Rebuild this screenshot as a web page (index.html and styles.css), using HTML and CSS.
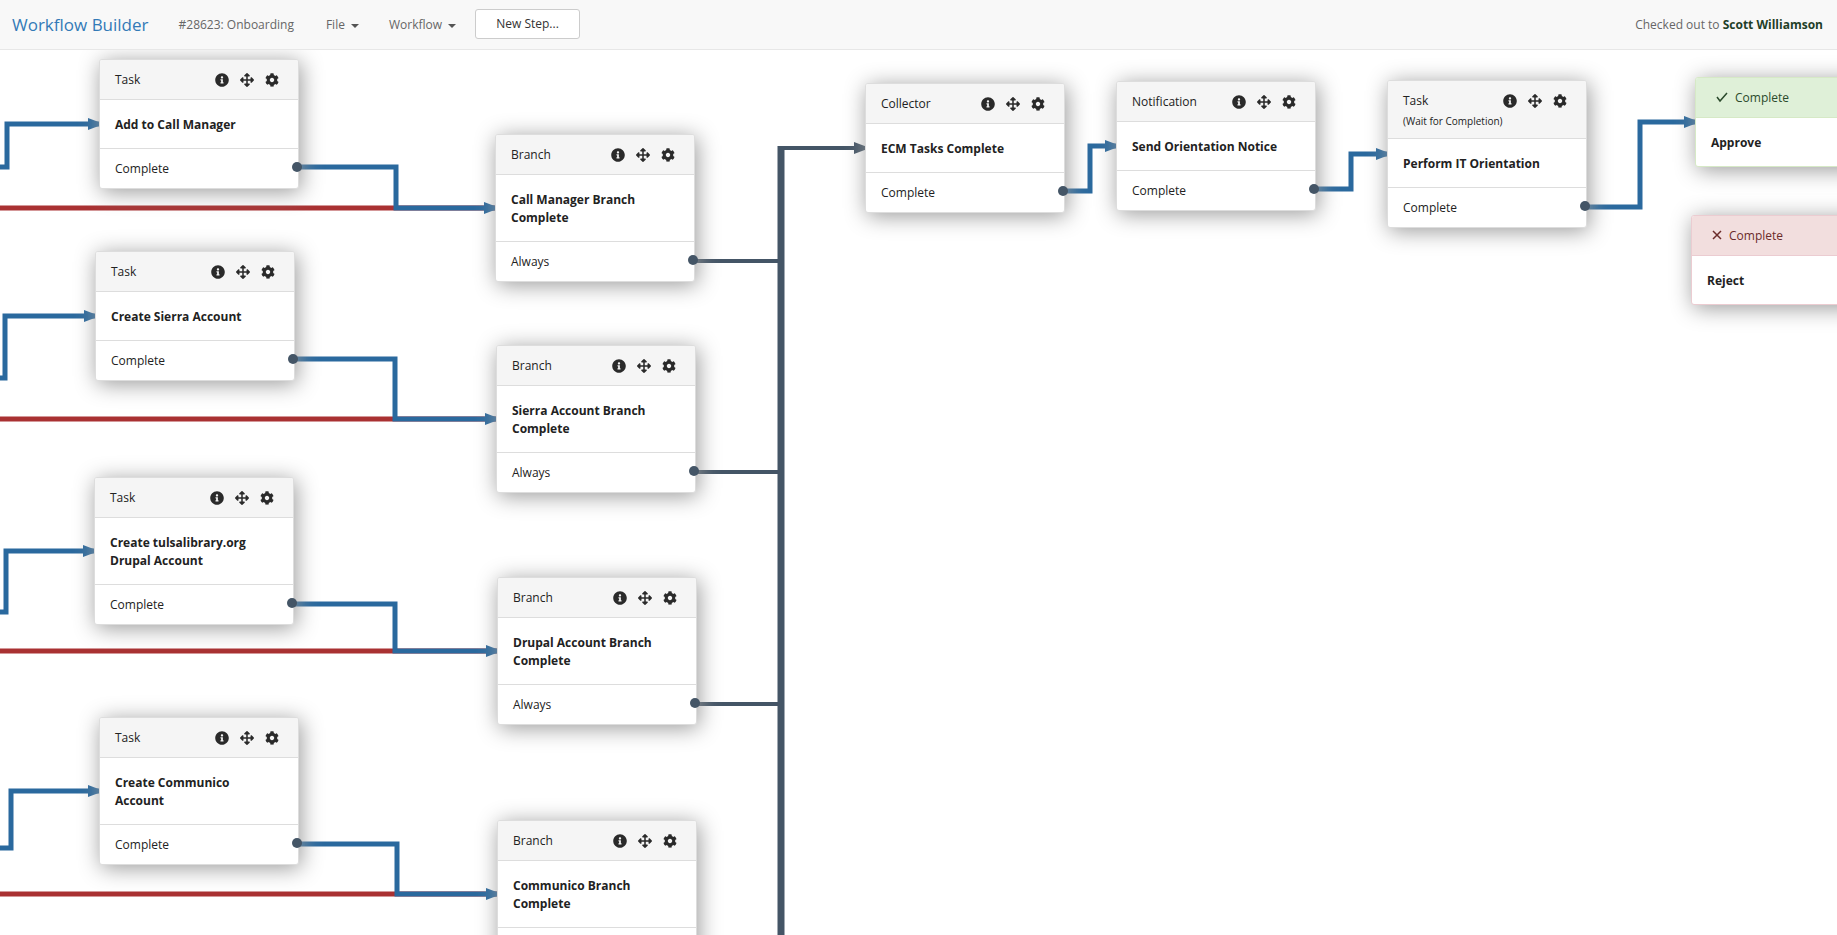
FILE: index.html
```html
<!DOCTYPE html>
<html lang="en">
<head>
<meta charset="utf-8">
<title>Workflow Builder</title>
<link rel="stylesheet" href="styles.css">
</head>
<body>
<svg class="sprite" aria-hidden="true">
  <symbol id="i-info" viewBox="0 0 512 512"><path d="M256 8C119.043 8 8 119.083 8 256c0 136.997 111.043 248 248 248s248-111.003 248-248C504 119.083 392.957 8 256 8zm0 110c23.196 0 42 18.804 42 42s-18.804 42-42 42-42-18.804-42-42 18.804-42 42-42zm56 254c0 6.627-5.373 12-12 12h-88c-6.627 0-12-5.373-12-12v-24c0-6.627 5.373-12 12-12h12v-64h-12c-6.627 0-12-5.373-12-12v-24c0-6.627 5.373-12 12-12h64c6.627 0 12 5.373 12 12v100h12c6.627 0 12 5.373 12 12v24z"/></symbol>
  <symbol id="i-move" viewBox="0 0 512 512"><path d="M352.201 425.775l-79.196 79.196c-9.373 9.373-24.568 9.373-33.941 0l-79.196-79.196c-15.119-15.119-4.411-40.971 16.971-40.97h51.162L228 284H127.196v51.162c0 21.382-25.851 32.09-40.971 16.971L7.029 272.937c-9.373-9.373-9.373-24.569 0-33.941L86.225 159.8c15.119-15.119 40.971-4.411 40.971 16.971V228H228V127.196h-51.23c-21.382 0-32.09-25.851-16.971-40.971l79.196-79.196c9.373-9.373 24.568-9.373 33.941 0l79.196 79.196c15.119 15.119 4.411 40.971-16.971 40.971h-51.162V228h100.804v-51.162c0-21.382 25.851-32.09 40.97-16.971l79.196 79.196c9.373 9.373 9.373 24.569 0 33.941L425.773 352.2c-15.119 15.119-40.971 4.411-40.97-16.971V284H284v100.804h51.23c21.382 0 32.09 25.851 16.971 40.971z"/></symbol>
  <symbol id="i-gear" viewBox="0 0 512 512"><path d="M487.4 315.7l-42.6-24.6c4.3-23.2 4.3-47 0-70.2l42.6-24.6c4.9-2.8 7.1-8.6 5.5-14-11.1-35.6-30-67.8-54.7-94.6-3.8-4.1-10-5.1-14.8-2.3L380.8 110c-17.9-15.4-38.5-27.3-60.8-35.1V25.8c0-5.6-3.9-10.5-9.4-11.7-36.7-8.2-74.3-7.8-109.2 0-5.5 1.2-9.4 6.1-9.4 11.7V75c-22.2 7.9-42.8 19.8-60.8 35.1L88.7 85.5c-4.9-2.8-11-1.9-14.8 2.3-24.7 26.7-43.6 58.9-54.7 94.6-1.7 5.4.6 11.2 5.5 14L67.3 221c-4.3 23.2-4.3 47 0 70.2l-42.6 24.6c-4.9 2.8-7.1 8.6-5.5 14 11.1 35.6 30 67.8 54.7 94.6 3.8 4.1 10 5.1 14.8 2.3l42.6-24.6c17.9 15.4 38.5 27.3 60.8 35.1v49.2c0 5.6 3.9 10.5 9.4 11.7 36.7 8.2 74.3 7.8 109.2 0 5.5-1.2 9.4-6.1 9.4-11.7v-49.2c22.2-7.9 42.8-19.8 60.8-35.1l42.6 24.6c4.9 2.8 11 1.9 14.8-2.3 24.7-26.7 43.6-58.9 54.7-94.6 1.5-5.5-.7-11.3-5.6-14.1zM256 336c-44.1 0-80-35.9-80-80s35.9-80 80-80 80 35.9 80 80-35.9 80-80 80z"/></symbol>
  <symbol id="i-arrow" viewBox="0 0 16 12"><path d="M0 0L16 6L0 12Z"/></symbol>
</svg>

<header class="navbar">
  <a class="brand" href="#">Workflow Builder</a>
  <span class="nav-text">#28623: Onboarding</span>
  <button class="menu" type="button">File<span class="caret"></span></button>
  <button class="menu" type="button">Workflow<span class="caret"></span></button>
  <button class="new-step" type="button">New Step...</button>
  <p class="checkout">Checked out to <strong>Scott Williamson</strong></p>
</header>

<main class="canvas">
  <svg class="links" aria-hidden="true">
    <g class="red">
      <path d="M0 158H495"/><path d="M0 369H496"/><path d="M0 601H497"/><path d="M0 844H497"/>
    </g>
    <g class="blue">
      <path d="M0 117H7V74H99"/>
      <path d="M0 328H5V266H95"/>
      <path d="M0 562H6V501H94"/>
      <path d="M0 798H11V741H99"/>
      <path d="M297 117H396V158H495"/>
      <path d="M293 309H395V369H496"/>
      <path d="M292 554H395V601H497"/>
      <path d="M297 794H397V844H497"/>
      <path d="M1063 141H1090V96H1116"/>
      <path d="M1314 139H1351V104H1387"/>
      <path d="M1585 157H1640V72H1695"/>
    </g>
    <g class="slate">
      <path d="M693 211H780"/><path d="M694 422H780"/><path d="M695 654H780"/>
      <path d="M778 98H865"/>
      <path class="trunk" d="M781 96V1400"/>
    </g>
    <g class="heads">
      <use href="#i-arrow" x="88" y="68" width="16" height="12"/>
      <use href="#i-arrow" x="84" y="260" width="16" height="12"/>
      <use href="#i-arrow" x="83" y="495" width="16" height="12"/>
      <use href="#i-arrow" x="88" y="735" width="16" height="12"/>
      <use href="#i-arrow" x="484" y="152" width="16" height="12"/>
      <use href="#i-arrow" x="485" y="363" width="16" height="12"/>
      <use href="#i-arrow" x="486" y="595" width="16" height="12"/>
      <use href="#i-arrow" x="486" y="838" width="16" height="12"/>
      <use href="#i-arrow" x="1105" y="90" width="16" height="12"/>
      <use href="#i-arrow" x="1376" y="98" width="16" height="12"/>
      <use href="#i-arrow" x="1684" y="66" width="16" height="12"/>
      <use class="head-slate" href="#i-arrow" x="854" y="92" width="16" height="12"/>
    </g>
  </svg>

  <article class="node" style="--x:99px;--y:9px">
    <header class="node-head"><span>Task</span><span class="tools"><button type="button" aria-label="Info"><svg><use href="#i-info"/></svg></button><button type="button" aria-label="Move"><svg><use href="#i-move"/></svg></button><button type="button" aria-label="Settings"><svg class="gear"><use href="#i-gear"/></svg></button></span></header>
    <h2 class="node-title">Add to Call Manager</h2>
    <div class="outcome">Complete</div>
  </article>
  <article class="node" style="--x:95px;--y:201px">
    <header class="node-head"><span>Task</span><span class="tools"><button type="button" aria-label="Info"><svg><use href="#i-info"/></svg></button><button type="button" aria-label="Move"><svg><use href="#i-move"/></svg></button><button type="button" aria-label="Settings"><svg class="gear"><use href="#i-gear"/></svg></button></span></header>
    <h2 class="node-title">Create Sierra Account</h2>
    <div class="outcome">Complete</div>
  </article>
  <article class="node" style="--x:94px;--y:427px">
    <header class="node-head"><span>Task</span><span class="tools"><button type="button" aria-label="Info"><svg><use href="#i-info"/></svg></button><button type="button" aria-label="Move"><svg><use href="#i-move"/></svg></button><button type="button" aria-label="Settings"><svg class="gear"><use href="#i-gear"/></svg></button></span></header>
    <h2 class="node-title">Create tulsalibrary.org Drupal Account</h2>
    <div class="outcome">Complete</div>
  </article>
  <article class="node" style="--x:99px;--y:667px">
    <header class="node-head"><span>Task</span><span class="tools"><button type="button" aria-label="Info"><svg><use href="#i-info"/></svg></button><button type="button" aria-label="Move"><svg><use href="#i-move"/></svg></button><button type="button" aria-label="Settings"><svg class="gear"><use href="#i-gear"/></svg></button></span></header>
    <h2 class="node-title">Create Communico<br>Account</h2>
    <div class="outcome">Complete</div>
  </article>

  <article class="node" style="--x:495px;--y:84px">
    <header class="node-head"><span>Branch</span><span class="tools"><button type="button" aria-label="Info"><svg><use href="#i-info"/></svg></button><button type="button" aria-label="Move"><svg><use href="#i-move"/></svg></button><button type="button" aria-label="Settings"><svg class="gear"><use href="#i-gear"/></svg></button></span></header>
    <h2 class="node-title">Call Manager Branch<br>Complete</h2>
    <div class="outcome">Always</div>
  </article>
  <article class="node" style="--x:496px;--y:295px">
    <header class="node-head"><span>Branch</span><span class="tools"><button type="button" aria-label="Info"><svg><use href="#i-info"/></svg></button><button type="button" aria-label="Move"><svg><use href="#i-move"/></svg></button><button type="button" aria-label="Settings"><svg class="gear"><use href="#i-gear"/></svg></button></span></header>
    <h2 class="node-title">Sierra Account Branch<br>Complete</h2>
    <div class="outcome">Always</div>
  </article>
  <article class="node" style="--x:497px;--y:527px">
    <header class="node-head"><span>Branch</span><span class="tools"><button type="button" aria-label="Info"><svg><use href="#i-info"/></svg></button><button type="button" aria-label="Move"><svg><use href="#i-move"/></svg></button><button type="button" aria-label="Settings"><svg class="gear"><use href="#i-gear"/></svg></button></span></header>
    <h2 class="node-title">Drupal Account Branch<br>Complete</h2>
    <div class="outcome">Always</div>
  </article>
  <article class="node" style="--x:497px;--y:770px">
    <header class="node-head"><span>Branch</span><span class="tools"><button type="button" aria-label="Info"><svg><use href="#i-info"/></svg></button><button type="button" aria-label="Move"><svg><use href="#i-move"/></svg></button><button type="button" aria-label="Settings"><svg class="gear"><use href="#i-gear"/></svg></button></span></header>
    <h2 class="node-title">Communico Branch<br>Complete</h2>
    <div class="outcome"></div>
  </article>

  <article class="node" style="--x:865px;--y:33px">
    <header class="node-head"><span>Collector</span><span class="tools"><button type="button" aria-label="Info"><svg><use href="#i-info"/></svg></button><button type="button" aria-label="Move"><svg><use href="#i-move"/></svg></button><button type="button" aria-label="Settings"><svg class="gear"><use href="#i-gear"/></svg></button></span></header>
    <h2 class="node-title">ECM Tasks Complete</h2>
    <div class="outcome">Complete</div>
  </article>
  <article class="node" style="--x:1116px;--y:31px">
    <header class="node-head"><span>Notification</span><span class="tools"><button type="button" aria-label="Info"><svg><use href="#i-info"/></svg></button><button type="button" aria-label="Move"><svg><use href="#i-move"/></svg></button><button type="button" aria-label="Settings"><svg class="gear"><use href="#i-gear"/></svg></button></span></header>
    <h2 class="node-title">Send Orientation Notice</h2>
    <div class="outcome">Complete</div>
  </article>
  <article class="node" style="--x:1387px;--y:30px">
    <header class="node-head"><span>Task<small class="note">(Wait for Completion)</small></span><span class="tools"><button type="button" aria-label="Info"><svg><use href="#i-info"/></svg></button><button type="button" aria-label="Move"><svg><use href="#i-move"/></svg></button><button type="button" aria-label="Settings"><svg class="gear"><use href="#i-gear"/></svg></button></span></header>
    <h2 class="node-title">Perform IT Orientation</h2>
    <div class="outcome">Complete</div>
  </article>

  <article class="node approve" style="--x:1695px;--y:27px">
    <header class="node-head"><svg class="mark" viewBox="0 0 12 12" width="12" height="12"><path d="M1 6L4 10L11 2"/></svg>Complete</header>
    <h2 class="node-title">Approve</h2>
  </article>
  <article class="node reject" style="--x:1691px;--y:165px">
    <header class="node-head"><svg class="mark" viewBox="0 0 10 12" width="10" height="12"><path d="M1 2L9 10M9 2L1 10"/></svg>Complete</header>
    <h2 class="node-title">Reject</h2>
  </article>
</main>
</body>
</html>
```
FILE: styles.css
```css
* { box-sizing: border-box; }

body {
  margin: 0;
  height: 100vh;
  display: flex;
  flex-direction: column;
  overflow: hidden;
  background: #fff;
  color: #222;
  font: 12px/18px "Open Sans", "Segoe UI", sans-serif;
}

button { font: inherit; color: inherit; cursor: pointer; }

.sprite { position: absolute; width: 0; height: 0; }

.navbar {
  flex: none;
  display: flex;
  align-items: center;
  height: 50px;
  padding: 0 14px 0 12px;
  background: #f8f8f8;
  border-bottom: 1px solid #e7e7e7;
  color: #666;
}

.brand {
  margin-right: 30px;
  font-size: 17px;
  line-height: 20px;
  color: #337ab7;
  text-decoration: none;
}

.nav-text { margin-right: 17px; }

.menu {
  display: flex;
  align-items: center;
  gap: 6px;
  padding: 0 15px;
  border: 0;
  background: none;
}

.caret {
  margin-top: 2px;
  border: 4px solid transparent;
  border-top-color: #555;
  border-bottom: 0;
}

.new-step {
  min-width: 105px;
  height: 30px;
  margin: 0 0 2px 4px;
  padding: 0 18px;
  border: 1px solid #ccc;
  border-radius: 3px;
  background: #fff;
  color: #333;
}

.checkout { margin: 0 0 0 auto; }
.checkout strong { color: #1f3f28; }

.canvas {
  position: relative;
  flex: 1;
  overflow: hidden;
}

.links {
  position: absolute;
  inset: 0;
  width: 100%;
  height: 100%;
  fill: none;
  stroke-width: 5;
}

.red { stroke: #a93132; }
.blue { stroke: #2a699e; }
.slate { stroke: #456; stroke-width: 4; }
.trunk { stroke-width: 7; }
.heads { fill: #2a699e; }
.head-slate { fill: #456; }

.node {
  position: absolute;
  left: var(--x);
  top: var(--y);
  width: 200px;
  border: 1px solid #ddd;
  border-radius: 3px;
  background: #fff;
  box-shadow: 2px 3px 22px #999;
}

.node-head {
  display: flex;
  justify-content: space-between;
  padding: 11px 19px 10px 15px;
  border-bottom: 1px solid #ddd;
  border-radius: 2px 2px 0 0;
  background: #f5f5f5;
}

.note {
  display: block;
  margin: 2px 0 -2px;
  font-size: 10px;
  white-space: nowrap;
}

.tools {
  display: flex;
  gap: 11px;
  height: 18px;
  align-items: center;
}

.tools button {
  display: flex;
  padding: 0;
  border: 0;
  background: none;
}

.tools svg {
  width: 14px;
  height: 14px;
  fill: #2a2a2a;
}

.node-title {
  margin: 0;
  padding: 16px 15px 14px;
  font-size: 12px;
  font-weight: 700;
  line-height: 18px;
}

.outcome {
  position: relative;
  min-height: 40px;
  padding: 11px 15px 10px;
  border-top: 1px solid #ddd;
}

.outcome::after {
  content: "";
  position: absolute;
  right: -4px;
  top: 13px;
  width: 10px;
  height: 10px;
  border-radius: 50%;
  background: #456;
}

.mark {
  margin: 2px 7px 0 5px;
  fill: none;
  stroke: currentColor;
  stroke-width: 1.5;
}

.approve, .approve .node-head { border-color: #d6e9c6; }
.approve .node-head { justify-content: flex-start; background: #dff0d8; color: #2b4a2c; }
.reject, .reject .node-head { border-color: #ebccd1; }
.reject .node-head { justify-content: flex-start; background: #f2dede; color: #6b2b2a; }
```
